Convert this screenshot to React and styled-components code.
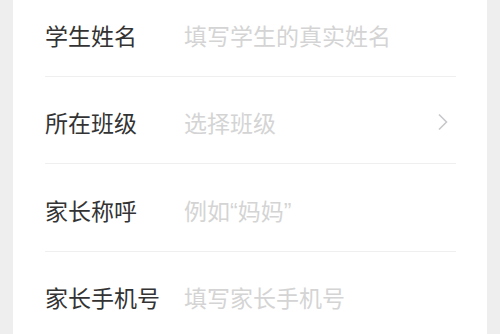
import styled, { createGlobalStyle } from "styled-components";

const GlobalStyle = createGlobalStyle`
  html, body {
    margin: 0;
    padding: 0;
    background: #eeeeee;
  }
  body {
    font-family: "Liberation Sans", "Noto Sans CJK SC", sans-serif;
  }
`;

const Page = styled.div`
  height: 100vh;
  padding: 0 13px;
  box-sizing: border-box;
  overflow: hidden;
`;

const Panel = styled.div`
  height: 100%;
  background: #ffffff;
  padding: 0 31px 0 32px;
  display: flex;
  flex-direction: column;
`;

const List = styled.div`
  margin-top: -11px;
  display: flex;
  flex-direction: column;
`;

const Row = styled.div`
  height: 87.5px;
  box-sizing: border-box;
  padding-top: 5px;
  border-bottom: 1px solid #efefef;
  display: flex;
  align-items: center;
`;

const Label = styled.div`
  width: 139px;
  flex-shrink: 0;
  font-size: 23px;
  color: #333333;
`;

const Placeholder = styled.div`
  flex: 1;
  font-size: 23px;
  color: #d4d4d4;
`;

const Arrow = styled.svg`
  width: 12px;
  height: 18px;
  margin-right: 7px;
  margin-top: 0;
`;

const Chevron = () => (
  <Arrow viewBox="0 0 12 18">
    <path d="M2 1.5 L9.5 9 L2 16.5" fill="none" stroke="#c8c8cc" strokeWidth="1.6" />
  </Arrow>
);

const fields = [
  { label: "学生姓名", hint: "填写学生的真实姓名" },
  { label: "所在班级", hint: "选择班级", select: true },
  { label: "家长称呼", hint: "例如“妈妈”" },
  { label: "家长手机号", hint: "填写家长手机号" },
];

export default function App() {
  return (
    <Page>
      <GlobalStyle />
      <Panel>
        <List>
          {fields.map((f) => (
            <Row key={f.label}>
              <Label>{f.label}</Label>
              <Placeholder>{f.hint}</Placeholder>
              {f.select && <Chevron />}
            </Row>
          ))}
        </List>
      </Panel>
    </Page>
  );
}
